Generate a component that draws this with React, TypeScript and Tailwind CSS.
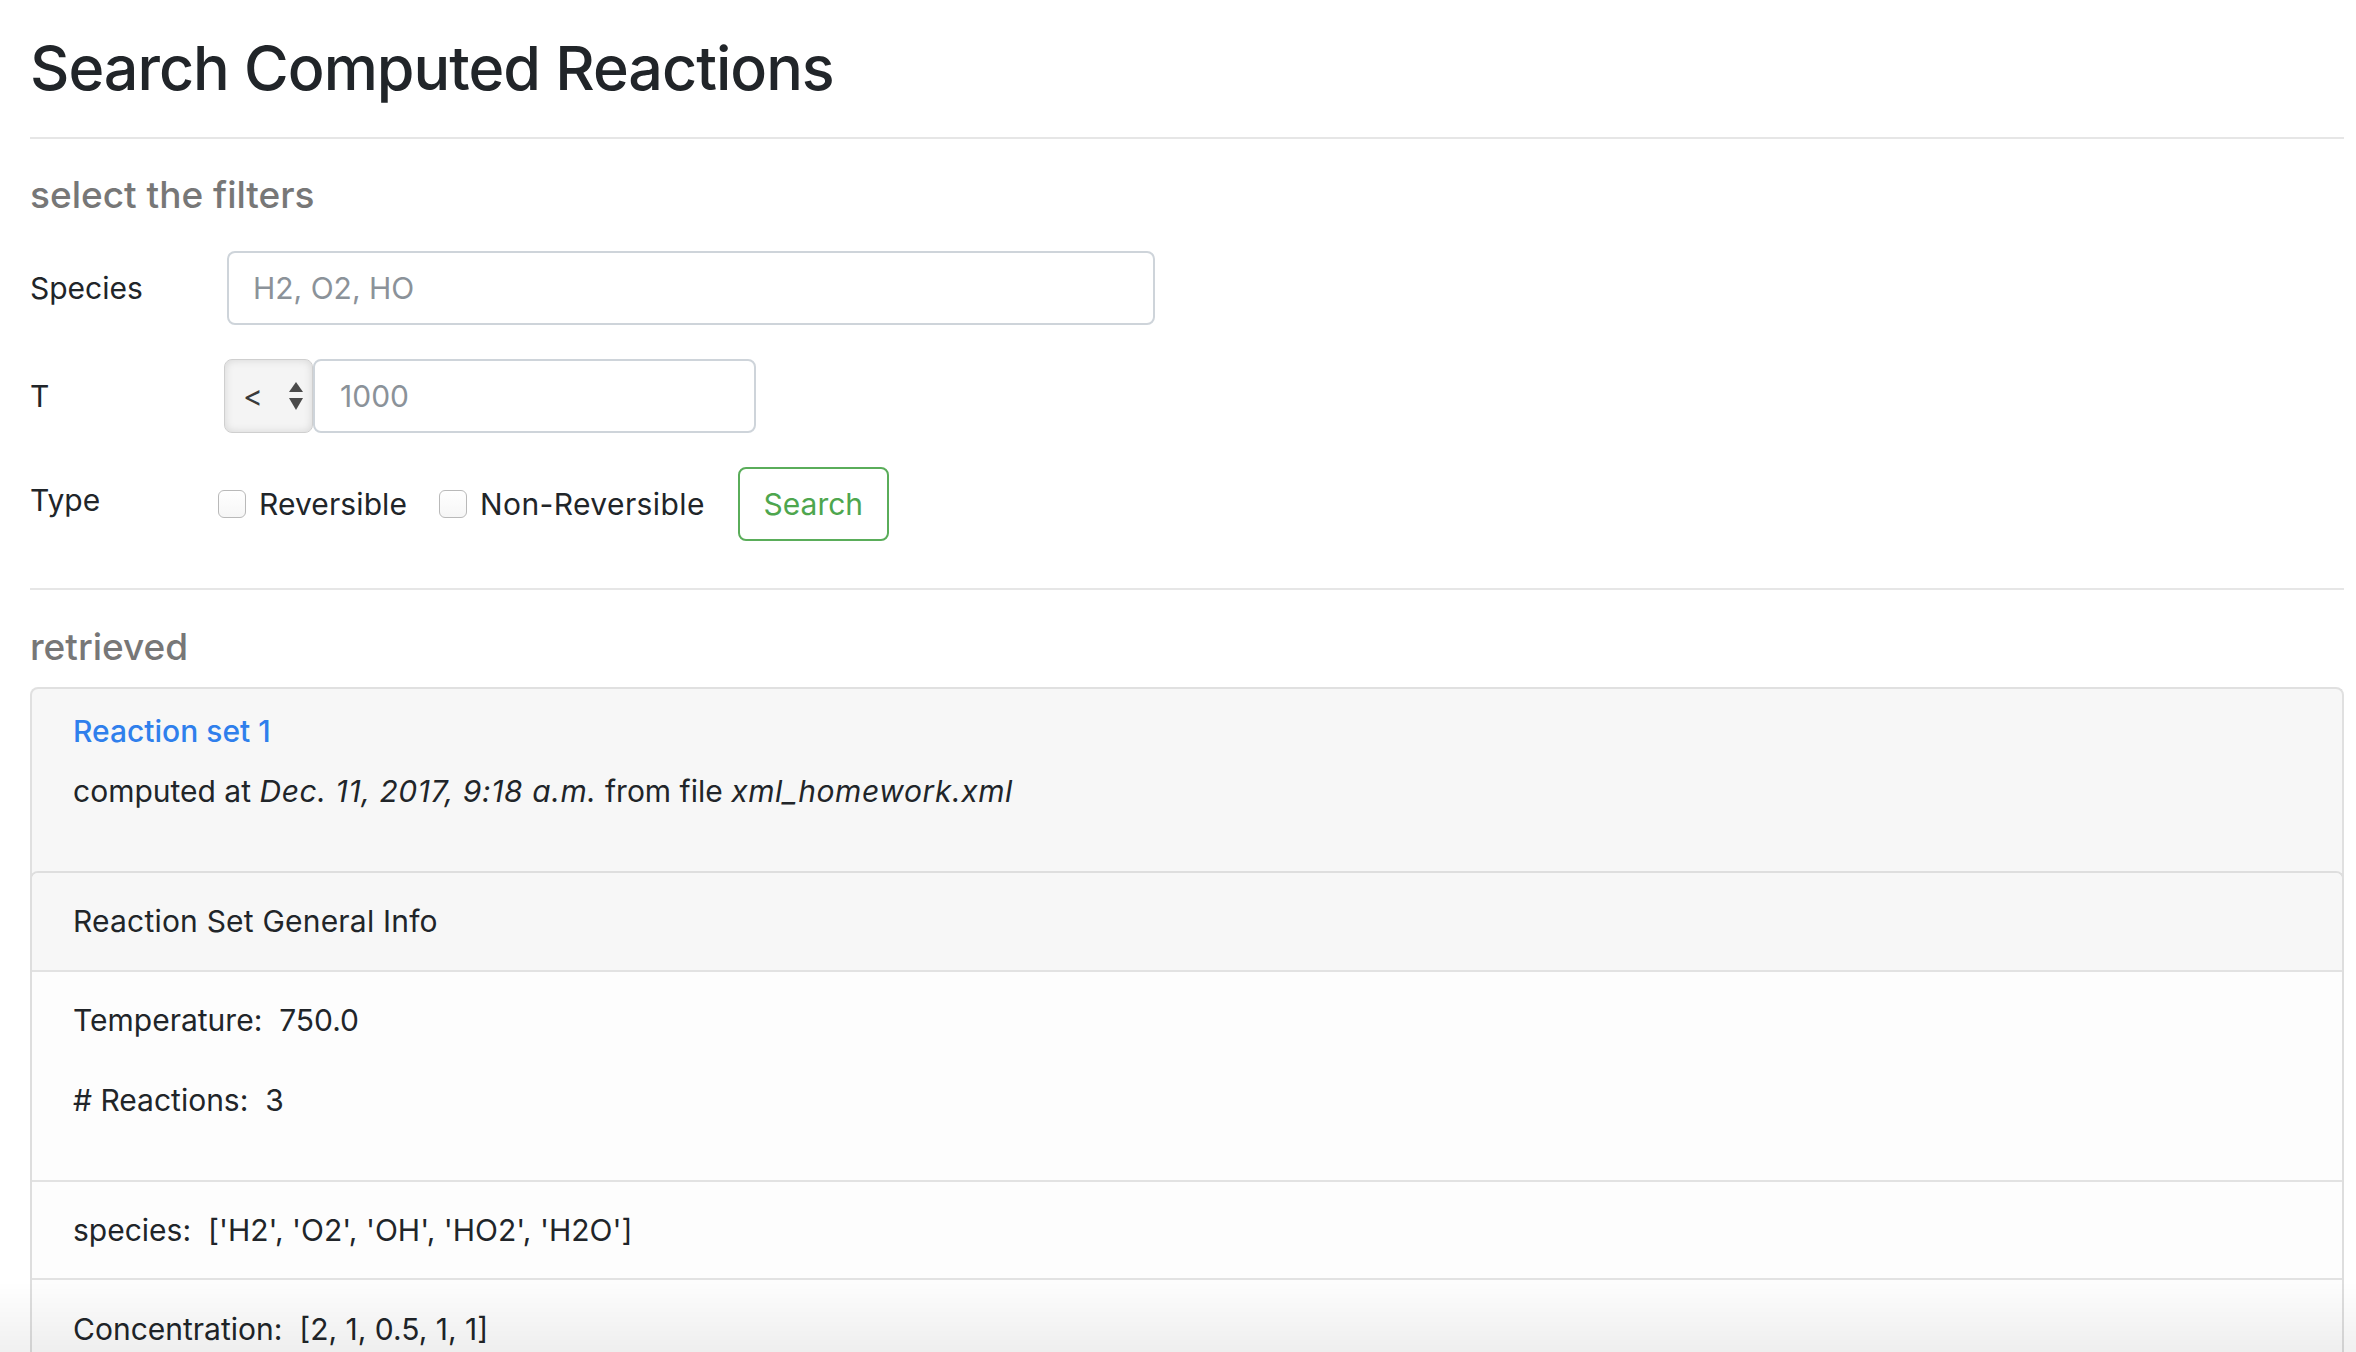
import React from "react";

function Checkbox() {
  return (
    <div className="h-[28px] w-[28px] shrink-0 rounded-[6px] border-[1.5px] border-[#b9b9b9] bg-linear-to-b from-white to-[#f6f6f6]" />
  );
}

export default function App() {
  return (
    <div className="relative min-h-screen bg-white pl-[30px] pr-[12px] font-['Inter',sans-serif] text-[30px] leading-[45px] text-[#212529]">
      <h1 className="pt-[38px] text-[61px] font-medium leading-[61px] tracking-[-1px] text-[#212529]">
        Search Computed Reactions
      </h1>
      <hr className="mt-[38px] h-[2px] border-0 bg-[#e6e6e6]" />

      <h4 className="mt-[34px] text-[37px] font-medium leading-[44px] text-[#777777]">
        select the filters
      </h4>

      <div className="mt-[34px] flex flex-col gap-[34px]">
        <div className="flex h-[74px] items-center">
          <label className="w-[188px] shrink-0">Species</label>
          <input
            className="ml-[9px] h-[74px] w-[928px] rounded-[8px] border-2 border-[#ced4da] bg-white px-[24px] outline-none placeholder:text-[#8b9299]"
            placeholder="H2, O2, HO"
          />
        </div>

        <div className="flex h-[74px] items-center">
          <label className="w-[188px] shrink-0">T</label>
          <div className="ml-[6px] flex h-[74px] w-[89px] shrink-0 items-center rounded-[8px] border border-[#cfcfcf] bg-[#f4f4f4] pl-[18px] shadow-[inset_0_0_8px_rgba(0,0,0,0.13)]">
            <span className="text-[30px] leading-none text-[#3a3a3a]">&lt;</span>
            <svg className="ml-[26px]" width="14" height="28" viewBox="0 0 14 28">
              <path d="M7 0 L14 10 L0 10 Z" fill="#4a4a4a" />
              <path d="M0 16 L14 16 L7 28 Z" fill="#4a4a4a" />
            </svg>
          </div>
          <input
            className="h-[74px] w-[443px] rounded-[8px] border-2 border-[#ced4da] bg-white px-[25px] outline-none placeholder:text-[#8b9299]"
            placeholder="1000"
          />
        </div>

        <div className="flex h-[74px] items-center">
          <label className="-mt-[8px] w-[188px] shrink-0">Type</label>
          <Checkbox />
          <span className="ml-[13px] tracking-[0.1px]">Reversible</span>
          <div className="ml-[32px]">
            <Checkbox />
          </div>
          <span className="ml-[13px] tracking-[0.4px]">Non-Reversible</span>
          <button className="ml-[33px] h-[74px] w-[151px] rounded-[8px] border-2 border-[#5aad5a] bg-white text-[30px] text-[#4ea64e]">
            Search
          </button>
        </div>
      </div>

      <hr className="mt-[47px] h-[2px] border-0 bg-[#e6e6e6]" />

      <h4 className="mt-[35px] text-[37px] font-medium leading-[44px] text-[#777777]">
        retrieved
      </h4>

      <div className="mt-[18px] rounded-t-[8px] border-x-2 border-t-2 border-[#e0e0e0] bg-[#f7f7f7]">
        <div className="h-[182px] pl-[41px] pt-[20px]">
          <div className="font-medium text-[#2f7fec]">Reaction set 1</div>
          <div className="mt-[15px]">
            computed at{" "}
            <i className="tracking-[0.6px]">Dec. 11, 2017, 9:18 a.m.</i> from file{" "}
            <i className="tracking-[0.6px]">xml_homework.xml</i>
          </div>
        </div>

        <div className="-mx-[2px] rounded-t-[8px] border-x-2 border-t-2 border-[#dedede] bg-[#fdfdfd]">
          <div className="flex h-[99px] items-center rounded-t-[6px] border-b-2 border-[#e2e2e2] bg-[#f7f7f7] pl-[41px] tracking-[0.2px]">
            Reaction Set General Info
          </div>
          <div className="border-b-2 border-[#e2e2e2] pb-[57px] pl-[41px] pt-[26px]">
            <div className="whitespace-pre">Temperature:  750.0</div>
            <div className="mt-[35px] whitespace-pre"># Reactions:  3</div>
          </div>
          <div className="flex h-[98px] items-center whitespace-pre border-b-2 border-[#e2e2e2] pl-[41px]">
            species:  ['H2', 'O2', 'OH', 'HO2', 'H2O']
          </div>
          <div className="flex h-[98px] items-center whitespace-pre pl-[41px]">
            Concentration:  [2, 1, 0.5, 1, 1]
          </div>
        </div>
      </div>

      <div className="pointer-events-none fixed inset-x-0 bottom-0 h-[70px] bg-linear-to-b from-transparent to-[rgba(0,0,0,0.06)]" />
    </div>
  );
}
